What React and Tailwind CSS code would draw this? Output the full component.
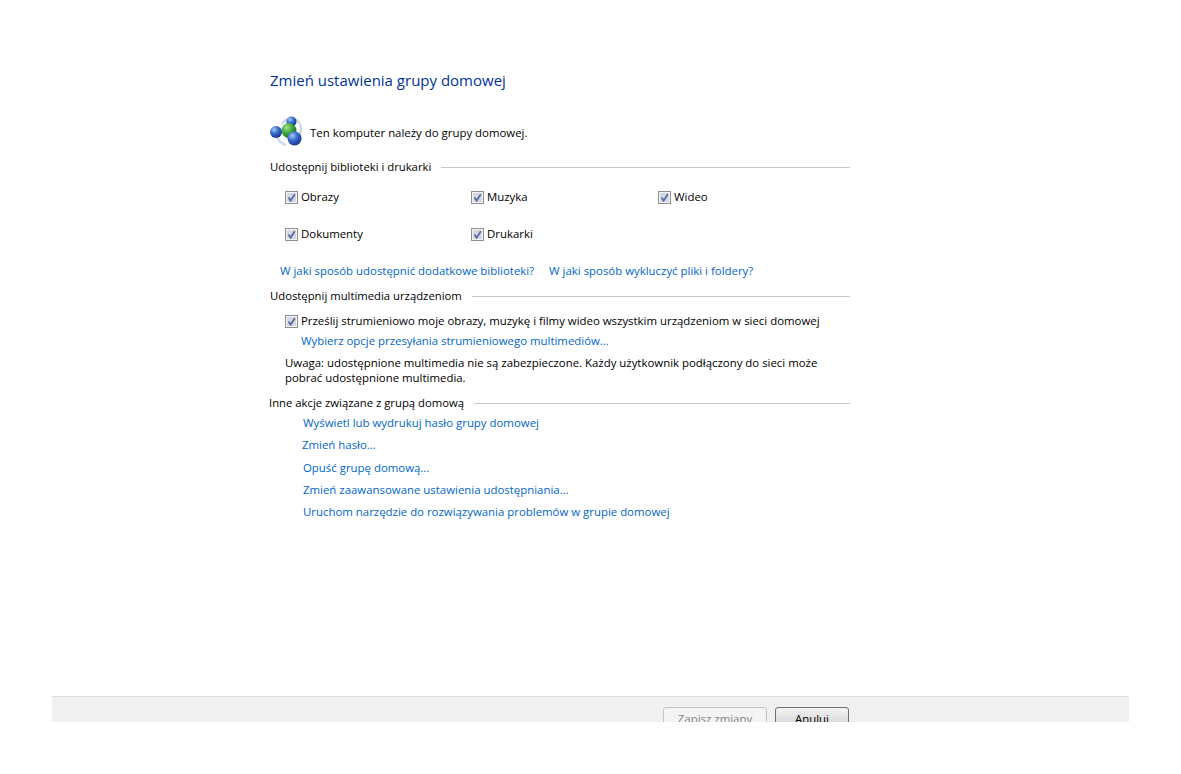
const FONT = "font-['Open_Sans','Noto_Sans',sans-serif]";
const LINK = 'text-[#0066cc]';

function CheckMark() {
  return (
    <svg width="13" height="13" viewBox="0 0 13 13" className="shrink-0">
      <rect x="0.5" y="0.5" width="12" height="12" fill="#f4f4f4" stroke="#8e8f8f" />
      <rect x="2" y="2" width="9" height="9" fill="#d3d9e2" />
      <path d="M3.5 6.5 L5.6 9.6 L9.8 3.2" fill="none" stroke="#56699f" strokeWidth="1.7" />
    </svg>
  );
}

function Check({ label, className = '' }) {
  return (
    <div className={`flex items-center gap-[3px] h-4 ${className}`}>
      <CheckMark />
      <span className="whitespace-nowrap">{label}</span>
    </div>
  );
}

function SectionTitle({ title, className = '' }) {
  return (
    <div className={`flex items-center gap-[10px] h-4 ${className}`}>
      <span className="whitespace-nowrap text-[11.3px]">{title}</span>
      <div className="flex-1 h-px bg-[#c8c8c8]" />
    </div>
  );
}

function HomegroupIcon() {
  return (
    <svg width="34" height="34" viewBox="0 0 34 34" className="shrink-0">
      <defs>
        <radialGradient id="blue" cx="35%" cy="30%" r="75%">
          <stop offset="0%" stopColor="#a9c8f5" />
          <stop offset="45%" stopColor="#3a6fd0" />
          <stop offset="100%" stopColor="#132f8c" />
        </radialGradient>
        <radialGradient id="green" cx="35%" cy="30%" r="75%">
          <stop offset="0%" stopColor="#a8e08a" />
          <stop offset="50%" stopColor="#3ca83c" />
          <stop offset="100%" stopColor="#14641f" />
        </radialGradient>
      </defs>
      <path d="M13 8 C17 1 29 0 31.5 10 C32.5 15 31.5 19 30 22 M8 22 C11 26 13 28 17 29" fill="none" stroke="#c9dbee" strokeWidth="2.5" />
      <circle cx="22.5" cy="5.5" r="5" fill="url(#blue)" />
      <circle cx="7" cy="16" r="6" fill="url(#blue)" />
      <circle cx="20" cy="14.5" r="7.5" fill="url(#green)" />
      <circle cx="25.5" cy="22.5" r="7" fill="url(#blue)" />
    </svg>
  );
}

export default function App() {
  return (
    <div className={`w-[1181px] h-[774px] bg-white flex flex-col text-[11.42px] leading-4 text-[#000] ${FONT}`}>
      <main className="flex-1 pl-[270px] pt-[70px]">
        <div className="w-[580px]">
          <h1 className="text-[15px] leading-5 text-[#003399]">Zmień ustawienia grupy domowej</h1>

          <div className="flex items-center gap-[7px] mt-[26px] -ml-[1px]">
            <HomegroupIcon />
            <span>Ten komputer należy do grupy domowej.</span>
          </div>

          <div className="mt-[9px]">
            <SectionTitle title="Udostępnij biblioteki i drukarki" />
          </div>

          <div className="grid grid-cols-[186px_187px_1fr] gap-y-[21px] pl-[15px] mt-[14px]">
            <Check label="Obrazy" />
            <Check label="Muzyka" />
            <Check label="Wideo" />
            <Check label="Dokumenty" />
            <Check label="Drukarki" />
          </div>

          <div className={`flex gap-[15px] pl-[10px] mt-[21px] ${LINK}`}>
            <span>W jaki sposób udostępnić dodatkowe biblioteki?</span>
            <span>W jaki sposób wykluczyć pliki i foldery?</span>
          </div>

          <div className="mt-[9px]">
            <SectionTitle title="Udostępnij multimedia urządzeniom" />
          </div>

          <div className="pl-[15px] mt-[9px]">
            <Check label="Prześlij strumieniowo moje obrazy, muzykę i filmy wideo wszystkim urządzeniom w sieci domowej" />
            <div className={`pl-[16px] mt-1 ${LINK}`}>Wybierz opcje przesyłania strumieniowego multimediów...</div>
            <p className="mt-[6px] leading-[15px] w-[550px]">
              Uwaga: udostępnione multimedia nie są zabezpieczone. Każdy użytkownik podłączony do sieci może pobrać udostępnione multimedia.
            </p>
          </div>

          <div className="mt-[10px]">
            <SectionTitle title="Inne akcje związane z grupą domową" className="-ml-px" />
          </div>

          <div className={`flex flex-col pl-[33px] mt-[4px] ${LINK}`}>
            <span>Wyświetl lub wydrukuj hasło grupy domowej</span>
            <span className="-ml-px mt-[6px]">Zmień hasło...</span>
            <span className="mt-[7px]">Opuść grupę domową...</span>
            <span className="mt-[6px]">Zmień zaawansowane ustawienia udostępniania...</span>
            <span className="mt-[6px]">Uruchom narzędzie do rozwiązywania problemów w grupie domowej</span>
          </div>
        </div>
      </main>

      <footer className="mx-[52px] mb-[52px] h-[26px] overflow-hidden bg-[#f0f0f0] border-t border-[#dfdfdf] flex justify-end gap-2 pt-[10px] pr-[280px]">
        <button className="w-[104px] h-[23px] shrink-0 rounded-[3px] border border-[#c4c4c4] bg-[#f4f4f4] text-[#838383] text-[11.42px]">Zapisz zmiany</button>
        <button className="w-[74px] h-[23px] shrink-0 rounded-[3px] border border-[#707070] bg-gradient-to-b from-[#f2f2f2] to-[#d0d0d0] text-[#000] text-[11.42px]">Anuluj</button>
      </footer>
    </div>
  );
}
